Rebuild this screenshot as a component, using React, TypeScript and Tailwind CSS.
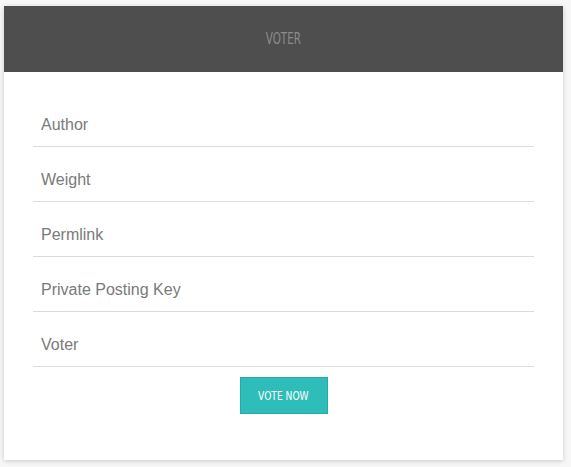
import React from 'react';

const fields = ['Author', 'Weight', 'Permlink', 'Private Posting Key', 'Voter'];

const condensed = { fontFamily: '"DejaVu Sans Condensed", "Liberation Sans Narrow", "Roboto Condensed", sans-serif' };

export default function App() {
  return (
    <div className="min-h-[467px] w-[571px] bg-[#f7f7f7] pt-[6px] pl-[4px]">
      <div className="w-[559px] h-[454px] bg-white shadow-[0_1px_5px_rgba(0,0,0,0.18)] flex flex-col">
        {/* Header */}
        <div className="h-[66px] bg-[#4e4e4e] flex items-center justify-center">
          <span
            className="text-[16px] text-[#8c8c8c] scale-x-[0.72] inline-block"
            style={condensed}
          >
            VOTER
          </span>
        </div>

        {/* Form */}
        <form className="px-[29px] pt-[20px] flex flex-col" onSubmit={(e) => e.preventDefault()}>
          {fields.map((label) => (
            <div key={label} className="h-[55px] border-b border-[#dcdcdc] flex items-end pb-[11px]">
              <input
                placeholder={label}
                className="w-[500px] pl-[8px] text-[16px] leading-[20px] text-[#7a7a7a] placeholder:text-[#7a7a7a] bg-transparent outline-none"
                style={{ fontFamily: '"Liberation Sans", Arial, sans-serif' }}
              />
            </div>
          ))}
          <div className="flex justify-center pt-[10px]">
            <button
              type="submit"
              className="w-[88px] h-[37px] bg-[#2fbdb9] border border-[#26aaa6] text-white text-[13px] flex items-center justify-center"
            >
              <span className="inline-block scale-x-[0.78]" style={condensed}>VOTE NOW</span>
            </button>
          </div>
        </form>
      </div>
    </div>
  );
}
